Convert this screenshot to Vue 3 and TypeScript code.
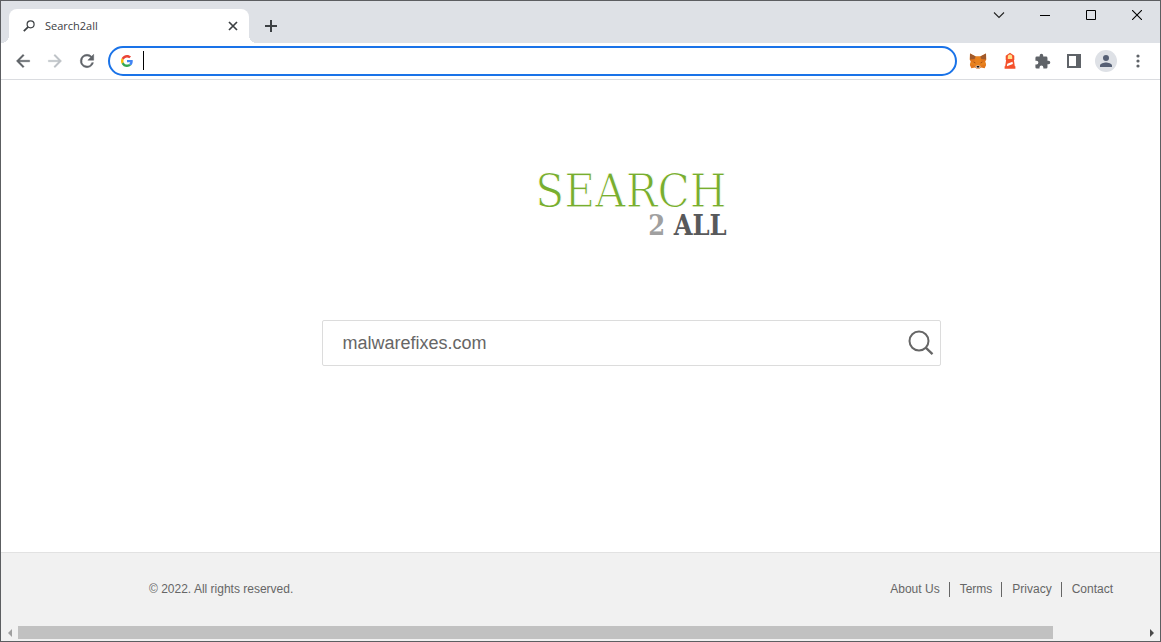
<script setup lang="ts">
import { ref } from 'vue'

const address = ref('')
const query = ref('malwarefixes.com')
const links: string[] = ['About Us', 'Terms', 'Privacy', 'Contact']
</script>

<template>
  <div class="window">
    <header class="strip">
      <div class="tab">
        <svg class="fav" width="12" height="12" viewBox="0 0 12 12" fill="none" stroke="#3c4043">
          <circle cx="7.6" cy="4.3" r="3.5" stroke-width="1.2" />
          <path d="M5.2 6.8 .8 11.2" stroke-width="1.7" />
        </svg>
        <span class="title">Search2all</span>
        <button class="plain close" aria-label="Close tab">
          <svg width="10" height="10" viewBox="0 0 10 10"><path d="M1 1l8 8M9 1L1 9" stroke="#3c4043" stroke-width="1.7" /></svg>
        </button>
      </div>
      <button class="plain add" aria-label="New tab">
        <svg width="12" height="12" viewBox="0 0 12 12"><path d="M6 0v12M0 6h12" stroke="#3c4043" stroke-width="2" /></svg>
      </button>
      <div class="controls">
        <button class="plain ctl" aria-label="Search tabs">
          <svg width="12" height="12" viewBox="0 0 12 12"><path d="M1 3.5l5 5 5-5" fill="none" stroke="#222" stroke-width="1.1" /></svg>
        </button>
        <button class="plain ctl" aria-label="Minimize">
          <svg width="10" height="10" viewBox="0 0 10 10"><path d="M0 5.5h10" stroke="#000" /></svg>
        </button>
        <button class="plain ctl" aria-label="Maximize">
          <svg width="10" height="10" viewBox="0 0 10 10"><path d="M.5.5h9v9h-9z" fill="none" stroke="#000" /></svg>
        </button>
        <button class="plain ctl" aria-label="Close">
          <svg width="10" height="10" viewBox="0 0 10 10"><path d="M0 0l10 10M10 0L0 10" stroke="#000" stroke-width="1.1" /></svg>
        </button>
      </div>
    </header>

    <nav class="toolbar">
      <button class="plain tool" aria-label="Back">
        <svg width="20" height="20" viewBox="0 0 24 24"><path fill="#5f6368" stroke="#5f6368" stroke-width=".4" d="M20 11H7.83l5.59-5.59L12 4l-8 8 8 8 1.41-1.41L7.83 13H20z" /></svg>
      </button>
      <button class="plain tool" aria-label="Forward">
        <svg width="20" height="20" viewBox="0 0 24 24"><path fill="#bdc1c6" stroke="#bdc1c6" stroke-width=".4" d="M4 11h12.17l-5.59-5.59L12 4l8 8-8 8-1.41-1.41L16.17 13H4z" /></svg>
      </button>
      <button class="plain tool" aria-label="Reload">
        <svg width="20" height="20" viewBox="0 0 24 24"><path fill="#5f6368" stroke="#5f6368" stroke-width=".6" d="M17.65 6.35A7.96 7.96 0 0 0 12 4a8 8 0 1 0 7.73 10h-2.08A6 6 0 1 1 12 6c1.66 0 3.14.69 4.22 1.78L13 11h7V4z" /></svg>
      </button>
      <div class="omnibox">
        <svg width="12" height="12" viewBox="0 0 48 48">
          <path fill="#ea4335" d="M24 9.500c3.540 0 6.710 1.220 9.210 3.600l6.850-6.850C35.900 2.380 30.470 0 24 0 14.620 0 6.510 5.380 2.560 13.220l7.980 6.190C12.430 13.720 17.740 9.500 24 9.500z" />
          <path fill="#4285f4" d="M46.980 24.550c0-1.570-.15-3.090-.38-4.550H24v9.020h12.940c-.58 2.960-2.260 5.480-4.780 7.180l7.730 6c4.510-4.180 7.090-10.360 7.090-17.650z" />
          <path fill="#fbbc05" d="M10.530 28.590A14.500 14.500 0 0 1 9.770 24c0-1.600.27-3.140.76-4.590l-7.980-6.190A24 24 0 0 0 0 24c0 3.880.92 7.540 2.560 10.780z" />
          <path fill="#34a853" d="M24 48c6.480 0 11.930-2.130 15.890-5.810l-7.730-6c-2.150 1.450-4.920 2.300-8.160 2.300-6.260 0-11.570-4.220-13.470-9.910l-7.980 6.190C6.510 42.620 14.620 48 24 48z" />
        </svg>
        <span class="caret"></span>
        <input v-model="address" class="address" aria-label="Address" spellcheck="false" />
      </div>
      <div class="extensions">
        <button class="plain tool" aria-label="Fox wallet">
          <svg width="18" height="18" viewBox="0 0 18 18">
            <path fill="#e2761b" d="M1 1.500 6.800 4.500h4.400L17 1.500l.3 6-1.100 2.300.9 3.200-1.400 3.300-3.800-.7-1.600 1.100H7.700l-1.600-1.100-3.800.7L.9 13l.9-3.200L.7 7.500z" />
            <path fill="#a05a2c" d="M1 1.500 6.800 4.500 5.500 7 1 7.500zM17 1.500l-5.800 3 1.300 2.500 4.500.5z" />
            <path fill="#e8821e" d="M6.800 4.500h4.400l1.300 5.500 3.700.2.900 2.800-3.700-.2-1.700 1.400H6.300l-1.700-1.400-3.700.2.900-2.800L5.500 10z" />
            <path fill="#9a4b18" d="m4.300 9.500 3 1.700-2.200-.1zM13.700 9.500l-3 1.700 2.200-.1z" />
            <path fill="#d7c1b3" d="m6.200 14.200 1.600-.6h2.400l1.600.6-1.600 2.200H7.800z" />
            <path fill="#161616" d="M7.600 14h2.800l-.4 1.500H8z" />
          </svg>
        </button>
        <button class="plain tool" aria-label="Lighthouse">
          <svg width="18" height="18" viewBox="0 0 18 18">
            <path fill="#f4512c" d="M9 .8 13.300 3.800V8h-.4l.9 6.200h.6v2.600H3.600v-2.600h.6L5.100 8h-.4V3.800z" />
            <path fill="#ffe08a" d="M6.800 4.800a2.200 2.200 0 0 1 4.400 0V7H6.800z" />
            <path fill="#fff" d="m6.300 11.700 5.200-2 .4 2.300-6 2.300z" />
          </svg>
        </button>
        <button class="plain tool" aria-label="Extensions">
          <svg width="17" height="17" viewBox="0 0 24 24"><path fill="#5f6368" d="M20.500 11H19V7a2 2 0 0 0-2-2h-4V3.500a2.500 2.500 0 0 0-5 0V5H4a2 2 0 0 0-1.990 2v3.800H3.500a2.700 2.700 0 0 1 0 5.400H2V20a2 2 0 0 0 2 2h3.800v-1.500a2.700 2.700 0 0 1 5.400 0V22H17a2 2 0 0 0 2-2v-4h1.500a2.500 2.500 0 0 0 0-5z" /></svg>
        </button>
        <button class="plain tool" aria-label="Side panel">
          <svg width="14" height="14" viewBox="0 0 14 14"><path fill="#5f6368" fill-rule="evenodd" d="M0 0h14v14H0zM2 2v10h7V2z" /></svg>
        </button>
        <button class="plain tool avatar" aria-label="Profile">
          <svg width="18" height="18" viewBox="0 0 24 24"><path fill="#566075" d="M12 12a4 4 0 1 0 0-8 4 4 0 0 0 0 8zm0 2c-2.670 0-8 1.340-8 4v2h16v-2c0-2.660-5.330-4-8-4z" /></svg>
        </button>
        <button class="plain tool" aria-label="Menu">
          <svg width="4" height="14" viewBox="0 0 4 14" fill="#5f6368"><circle cx="2" cy="2" r="1.6" /><circle cx="2" cy="7" r="1.6" /><circle cx="2" cy="12" r="1.6" /></svg>
        </button>
      </div>
    </nav>

    <div class="viewport">
      <div class="page">
        <main class="main">
          <h1 class="logo">
            <span class="logo-top">SEARCH</span>
            <span class="logo-bottom"><span class="two">2</span> ALL</span>
          </h1>
          <form class="search" @submit.prevent>
            <input v-model="query" class="query" aria-label="Search" spellcheck="false" />
            <button class="plain go" aria-label="Submit search">
              <svg width="26" height="26" viewBox="0 0 26 26" fill="none" stroke="#666"><circle cx="11" cy="11" r="9.500" stroke-width="2" /><path d="m17.700 17.700 6.800 6.500" stroke-width="2.300" /></svg>
            </button>
          </form>
        </main>
        <footer class="footer">
          <div class="footer-inner">
            <span>© 2022. All rights reserved.</span>
            <ul class="links">
              <li v-for="link in links" :key="link"><a href="#">{{ link }}</a></li>
            </ul>
          </div>
        </footer>
      </div>
    </div>

    <div class="scrollbar">
      <button class="plain arrow" aria-label="Scroll left">
        <svg width="4" height="8" viewBox="0 0 4 8"><path d="M4 0v8L0 4z" fill="#a0a0a0" /></svg>
      </button>
      <div class="track"><div class="thumb"></div></div>
      <button class="plain arrow" aria-label="Scroll right">
        <svg width="4" height="8" viewBox="0 0 4 8"><path d="M0 0v8l4-4z" fill="#4a4a4a" /></svg>
      </button>
    </div>
  </div>
</template>

<style>
body {
  margin: 0;
}
</style>

<style scoped>
.window {
  box-sizing: border-box;
  min-height: 100vh;
  display: flex;
  flex-direction: column;
  border: 1px solid #5c5e61;
  background: #fff;
  font-family: "Liberation Sans", Arial, sans-serif;
  font-size: 12px;
  color: #666;
}
.plain {
  display: flex;
  align-items: center;
  justify-content: center;
  padding: 0;
  border: 0;
  background: none;
}
svg {
  display: block;
  flex: none;
}
.strip {
  display: flex;
  height: 42px;
  background: #dee1e6;
}
.tab {
  position: relative;
  box-sizing: border-box;
  display: flex;
  align-items: center;
  width: 240px;
  height: 34px;
  margin: 8px 0 0 8px;
  padding: 0 10px 0 14px;
  border-radius: 8px 8px 0 0;
  background: #fff;
}
.tab::before,
.tab::after {
  content: "";
  position: absolute;
  bottom: 0;
  width: 8px;
  height: 8px;
}
.tab::before {
  left: -8px;
  background: radial-gradient(circle at 0 0, transparent 8px, #fff 8px);
}
.tab::after {
  right: -8px;
  background: radial-gradient(circle at 100% 0, transparent 8px, #fff 8px);
}
.title {
  flex: 1;
  margin-left: 10px;
  font-family: "Open Sans", "Noto Sans", sans-serif;
  font-size: 11px;
  line-height: 16px;
  color: #3c4043;
}
.close {
  width: 12px;
  height: 16px;
}
.add {
  width: 28px;
  height: 34px;
  margin: 8px 0 0 8px;
}
.controls {
  display: flex;
  margin-left: auto;
}
.ctl {
  width: 46px;
  height: 28px;
}
.toolbar {
  display: flex;
  align-items: center;
  height: 36px;
  padding-left: 6px;
  border-bottom: 1px solid #dadce0;
}
.tool {
  width: 32px;
  height: 32px;
}
.omnibox {
  box-sizing: border-box;
  flex: 1;
  display: flex;
  align-items: center;
  height: 30px;
  margin-left: 5px;
  padding-left: 11px;
  border: 2px solid #1a73e8;
  border-radius: 15px;
}
.caret {
  width: 1px;
  height: 19px;
  margin: 0 0 2px 10px;
  background: #000;
}
.address {
  flex: 1;
  min-width: 0;
  padding: 0;
  border: 0;
  outline: 0;
  background: none;
  font: inherit;
}
.extensions {
  display: flex;
  align-items: center;
  padding: 0 6px 0 5px;
}
.avatar {
  width: 22px;
  height: 22px;
  margin: 0 5px;
  border-radius: 50%;
  background: #dee1e6;
}
.viewport {
  flex: 1;
  display: flex;
  overflow: hidden;
}
.page {
  flex: 1 0 auto;
  min-width: 1260px;
  display: flex;
  flex-direction: column;
}
.main {
  flex: 1;
  display: flex;
  flex-direction: column;
  align-items: center;
  padding-top: 87px;
}
.logo {
  display: flex;
  flex-direction: column;
  align-items: flex-end;
  margin: 0;
  font-family: "DejaVu Serif Condensed", "DejaVu Serif", serif;
  font-weight: 400;
}
.logo-top {
  font-size: 47px;
  line-height: 48px;
  color: #78ae2f;
  -webkit-text-stroke: 1px #fff;
}
.logo-bottom {
  font-size: 27px;
  line-height: 22px;
  font-weight: 700;
  color: #58595b;
}
.two {
  color: #a0a0a0;
}
.search {
  box-sizing: border-box;
  display: flex;
  width: 619px;
  height: 46px;
  margin-top: 83px;
  border: 1px solid #dcdcdc;
  border-radius: 2px;
}
.query {
  flex: 1;
  min-width: 0;
  padding: 0 0 0 20px;
  border: 0;
  outline: 0;
  background: none;
  font-family: inherit;
  font-size: 18px;
  color: #666;
}
.go {
  width: 38px;
}
.footer {
  border-top: 1px solid #e2e2e2;
  background: #f1f1f1;
}
.footer-inner {
  display: flex;
  align-items: center;
  justify-content: space-between;
  width: 964px;
  height: 73px;
  margin: 0 auto;
  line-height: 15px;
}
.links {
  display: flex;
  margin: 0;
  padding: 0;
  list-style: none;
}
.links li + li {
  margin-left: 9px;
  padding-left: 10px;
  border-left: 1px solid #666;
}
.links a {
  color: inherit;
  text-decoration: none;
}
.scrollbar {
  box-sizing: border-box;
  display: flex;
  height: 15px;
  padding-bottom: 2px;
  background: #f1f1f1;
}
.arrow {
  width: 17px;
}
.track {
  flex: 1;
}
.thumb {
  width: 92%;
  height: 100%;
  background: #c1c1c1;
}
</style>
